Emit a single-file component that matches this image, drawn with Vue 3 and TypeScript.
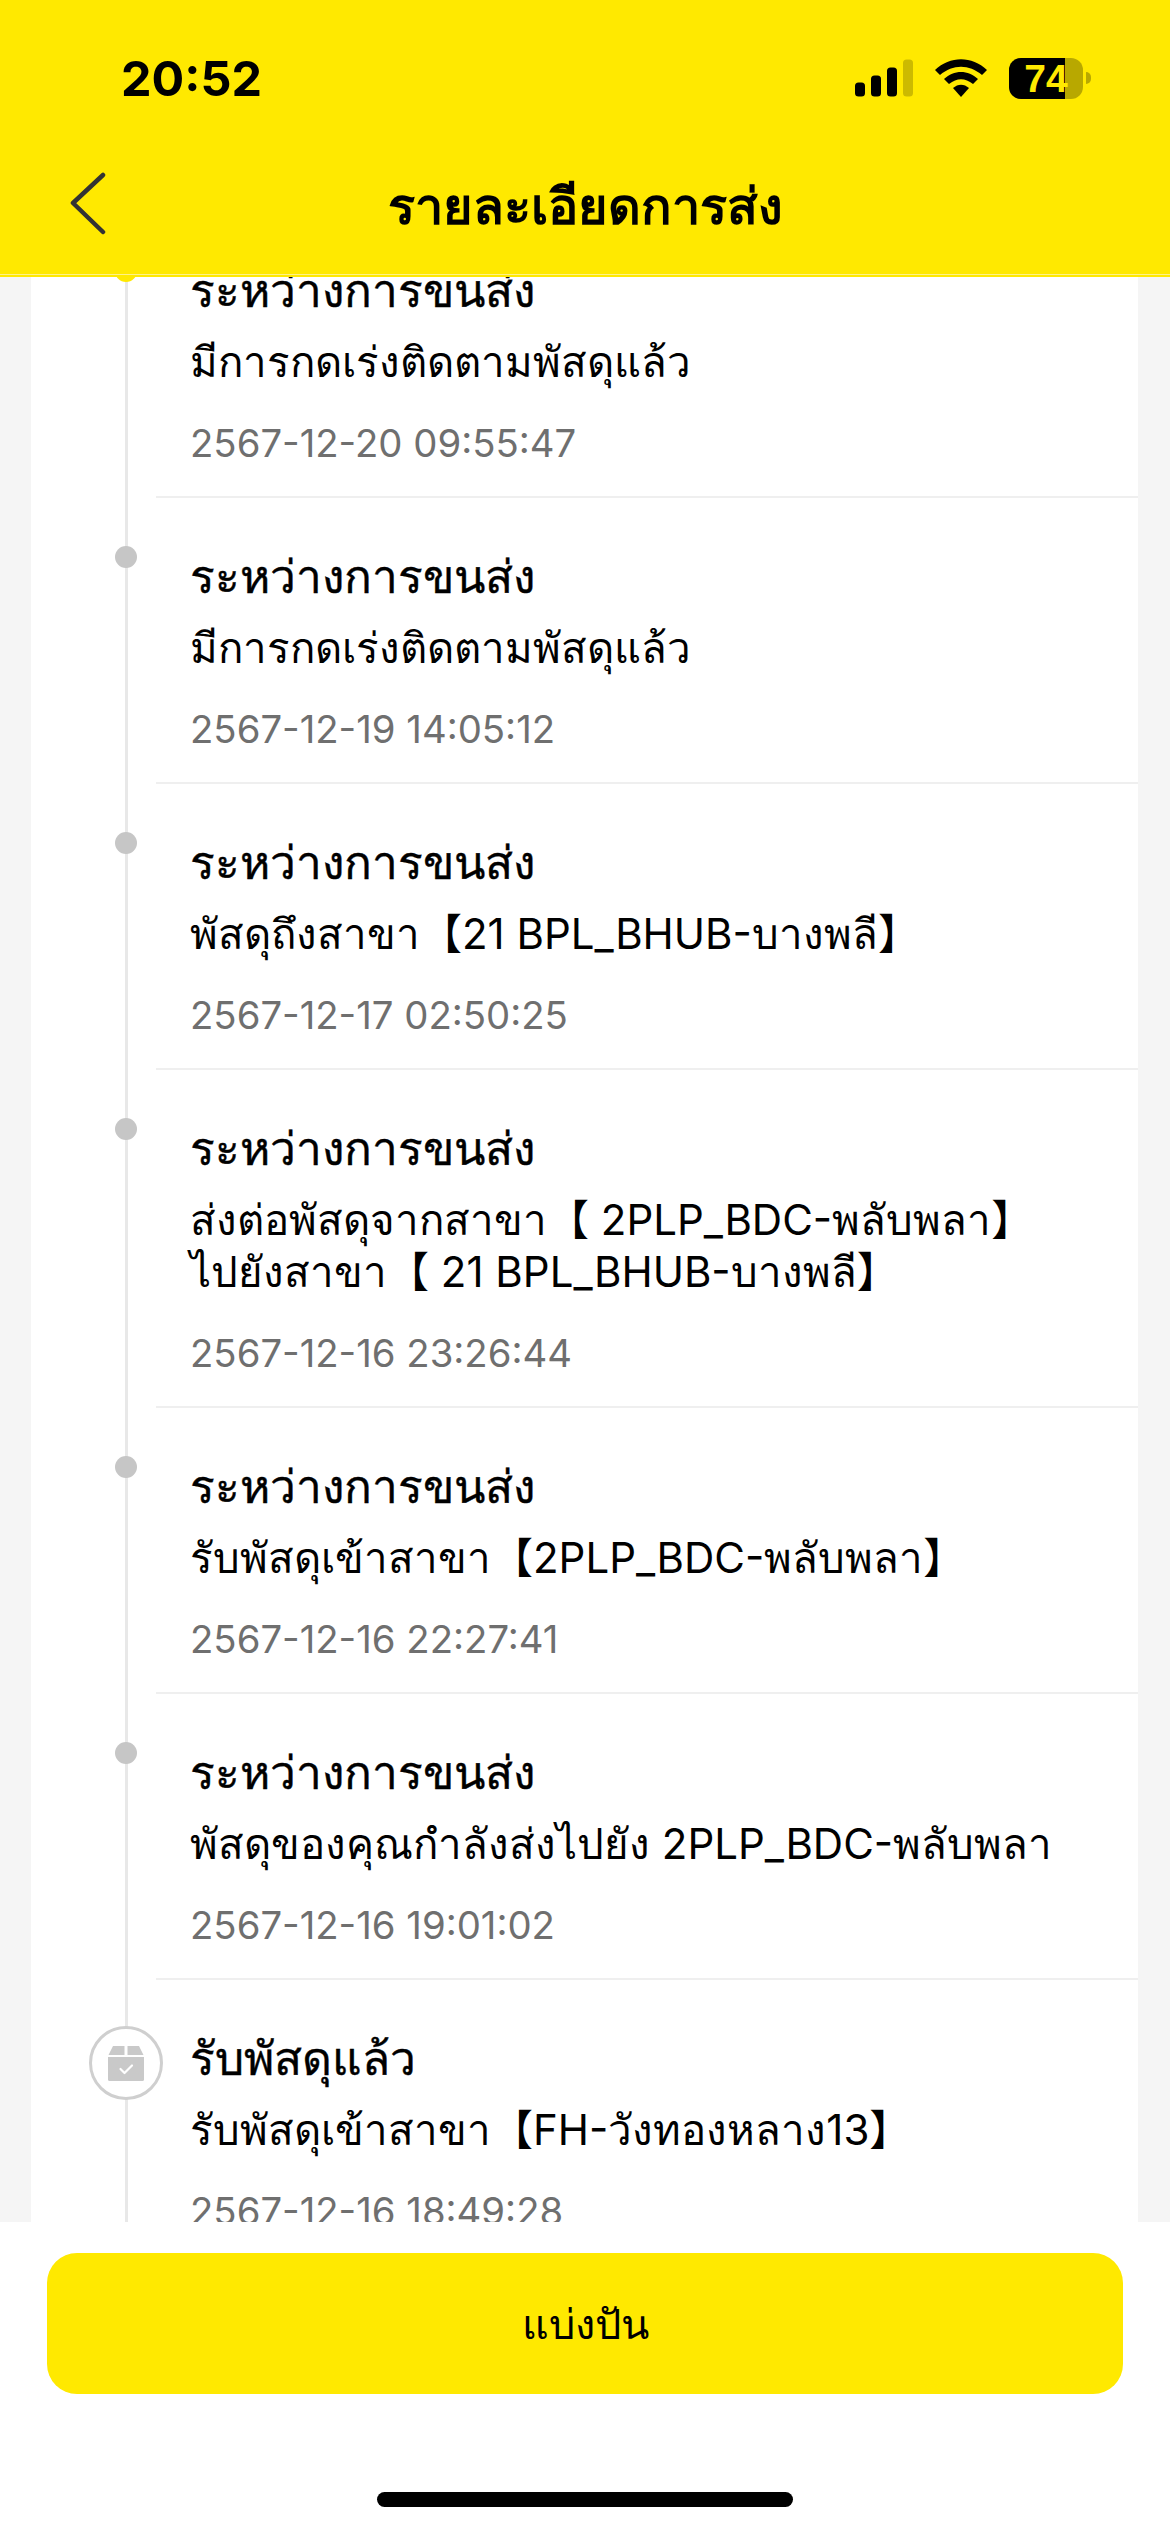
<script setup lang="ts">
interface TrackItem {
  title: string;
  lines: string[];
  time: string;
  icon?: boolean;
}

const items: TrackItem[] = [
  { title: "ระหว่างการขนส่ง", lines: ["มีการกดเร่งติดตามพัสดุแล้ว"], time: "2567-12-20 09:55:47" },
  { title: "ระหว่างการขนส่ง", lines: ["มีการกดเร่งติดตามพัสดุแล้ว"], time: "2567-12-19 14:05:12" },
  { title: "ระหว่างการขนส่ง", lines: ["พัสดุถึงสาขา【21 BPL_BHUB-บางพลี】"], time: "2567-12-17 02:50:25" },
  {
    title: "ระหว่างการขนส่ง",
    lines: ["ส่งต่อพัสดุจากสาขา【 2PLP_BDC-พลับพลา】", "ไปยังสาขา【 21 BPL_BHUB-บางพลี】"],
    time: "2567-12-16 23:26:44",
  },
  { title: "ระหว่างการขนส่ง", lines: ["รับพัสดุเข้าสาขา【2PLP_BDC-พลับพลา】"], time: "2567-12-16 22:27:41" },
  { title: "ระหว่างการขนส่ง", lines: ["พัสดุของคุณกำลังส่งไปยัง 2PLP_BDC-พลับพลา"], time: "2567-12-16 19:01:02" },
  { title: "รับพัสดุแล้ว", lines: ["รับพัสดุเข้าสาขา【FH-วังทองหลาง13】"], time: "2567-12-16 18:49:28", icon: true },
];
</script>

<template>
  <div class="page">
    <header class="header">
      <div class="status">
        <span class="clock">20:52</span>
        <div class="status-icons">
          <svg class="signal" width="58" height="38" viewBox="0 0 58 38">
            <rect x="0" y="23.500" width="10" height="14" rx="3.5" fill="#000" />
            <rect x="16" y="16.500" width="10" height="21" rx="3.5" fill="#000" />
            <rect x="32" y="8.500" width="10" height="29" rx="3.5" fill="#000" />
            <rect x="48" y="0.500" width="10" height="37" rx="3.5" fill="#000" fill-opacity="0.2" />
          </svg>
          <svg class="wifi" width="52" height="38" viewBox="0 0 52 38">
            <path d="M0 11 C15 -3.500 37 -3.500 52 11 L47 16 C34 5 18 5 5 16 Z" fill="#000" />
            <path d="M9 20 C19 10.500 33 10.500 43 20 L38 25 C30 18.500 22 18.500 14 25 Z" fill="#000" />
            <path d="M18 29 C23 24.500 29 24.500 34 29 L26 38 Z" fill="#000" />
          </svg>
          <div class="battery">
            <div class="battery-body">
              <div class="battery-fill" />
              <span class="battery-num">74</span>
            </div>
            <div class="battery-cap" />
          </div>
        </div>
      </div>
      <div class="nav">
        <svg class="back" width="40" height="66" viewBox="0 0 40 66">
          <path d="M35 3 L5 31 L35 60" fill="none" stroke="#333" stroke-width="4.500" stroke-linecap="round" stroke-linejoin="round" />
        </svg>
        <h1 class="nav-title">รายละเอียดการส่ง</h1>
      </div>
    </header>

    <main class="scroller">
      <div class="card">
        <div class="rail" />
        <section v-for="(item, i) in items" :key="i" class="item">
          <div class="marker">
            <div v-if="item.icon" class="badge">
              <svg width="38" height="38" viewBox="0 0 38 38">
                <path d="M6 2 H17.500 V11 H1.500 Z M20.500 2 H32 L36.500 11 H20.500 Z" fill="#c9c9c9" />
                <path d="M1 13 H37 V36 A1.500 1.500 0 0 1 35.500 37 H2.500 A1.500 1.500 0 0 1 1 36 Z" fill="#c9c9c9" />
                <path d="M13.500 25 L17.500 29 L25 21.500" fill="none" stroke="#fff" stroke-width="2.200" stroke-linecap="round" stroke-linejoin="round" />
              </svg>
            </div>
            <div v-else class="dot" :class="{ 'dot-active': i === 0 }" />
          </div>
          <div class="body">
            <h2 class="title">{{ item.title }}</h2>
            <p v-for="line in item.lines" :key="line" class="desc">{{ line }}</p>
            <p class="time">{{ item.time }}</p>
          </div>
        </section>
      </div>
    </main>

    <footer class="footer">
      <button class="share" type="button">แบ่งปัน</button>
      <div class="home-bar" />
    </footer>
  </div>
</template>

<style>
html,
body {
  margin: 0;
  background: #fff;
}
</style>

<style scoped>
.page {
  width: 1170px;
  height: 2532px;
  display: flex;
  flex-direction: column;
  overflow: hidden;
  font-family: "Liberation Sans", "Noto Sans", "Noto Sans CJK SC", sans-serif;
  color: #000;
}

.header {
  flex: none;
  height: 277px;
  background: #ffe900;
  box-shadow: inset 0 -2px 0 #ffe900, inset 0 -3px 0 #fff28a;
  position: relative;
  z-index: 2;
}

.status {
  height: 156px;
  box-sizing: border-box;
  padding: 0 79px 0 121px;
  display: flex;
  align-items: center;
  justify-content: space-between;
}

.clock {
  font-family: Inter, "Liberation Sans", sans-serif;
  font-size: 48.5px;
  font-weight: 700;
}

.status-icons {
  display: flex;
  align-items: center;
}

.signal {
  margin-right: 22px;
}

.wifi {
  margin-right: 22px;
}

.battery {
  display: flex;
  align-items: center;
}

.battery-body {
  position: relative;
  width: 74px;
  height: 41px;
  border-radius: 12px;
  background: rgba(0, 0, 0, 0.28);
  overflow: hidden;
}

.battery-fill {
  width: 56px;
  height: 100%;
  background: #000;
}

.battery-num {
  position: absolute;
  inset: 0;
  text-align: center;
  line-height: 41px;
  font-size: 39px;
  font-weight: 700;
  color: #ffe900;
}

.battery-cap {
  width: 5px;
  height: 12px;
  margin-left: 3px;
  border-radius: 0 6px 6px 0;
  background: rgba(0, 0, 0, 0.28);
}

.nav {
  height: 121px;
  box-sizing: border-box;
  padding-bottom: 22px;
  position: relative;
  display: flex;
  align-items: center;
  justify-content: center;
}

.back {
  position: absolute;
  left: 68px;
  top: 16px;
}

.nav-title {
  margin: 0;
  font-size: 50.5px;
  font-weight: 700;
}

.scroller {
  flex: 1;
  min-height: 0;
  overflow: hidden;
  background: #f5f5f5;
}

.card {
  position: relative;
  margin: -65px 32px 0 31px;
  background: #fff;
  padding-left: 125px;
}

.rail {
  position: absolute;
  left: 94px;
  top: 0;
  bottom: 0;
  width: 3px;
  background: #e8e8e8;
}

.item {
  position: relative;
  padding: 46px 0 0 34px;
  border-bottom: 2px solid #efefef;
}

.marker {
  position: absolute;
  left: -30px;
  top: 48px;
  width: 0;
  height: 0;
}

.dot {
  position: absolute;
  left: -11px;
  top: 0;
  width: 22px;
  height: 22px;
  border-radius: 50%;
  background: #c6c6c6;
}

.dot-active {
  background: #ffe900;
}

.badge {
  position: absolute;
  left: -37px;
  top: -2px;
  box-sizing: border-box;
  width: 74px;
  height: 74px;
  border-radius: 50%;
  border: 3px solid #cfcfcf;
  background: #fff;
  display: flex;
  align-items: center;
  justify-content: center;
}

.title {
  margin: 0;
  font-size: 46px;
  font-weight: 400;
  line-height: 66px;
  -webkit-text-stroke: 0.4px #000;
}

.desc {
  margin: 0;
  font-family: Inter, "Liberation Sans", "Noto Sans CJK SC", sans-serif;
  font-size: 42px;
  line-height: 52px;
}

.title + .desc {
  margin-top: 12px;
}

.time {
  margin: 32px 0 0;
  font-family: Inter, "Liberation Sans", sans-serif;
  font-size: 38.3px;
  line-height: 46px;
  padding-bottom: 30px;
  color: #6f6f6f;
}

.footer {
  flex: none;
  height: 310px;
  box-sizing: border-box;
  background: #fff;
  padding: 31px 47px 0;
  display: flex;
  flex-direction: column;
  align-items: center;
}

.share {
  width: 1076px;
  height: 141px;
  border: 0;
  border-radius: 30px;
  background: #ffe900;
  font-family: inherit;
  font-size: 41.5px;
  color: #000;
}

.home-bar {
  width: 416px;
  height: 15px;
  margin-top: 98px;
  border-radius: 8px;
  background: #000;
}
</style>
